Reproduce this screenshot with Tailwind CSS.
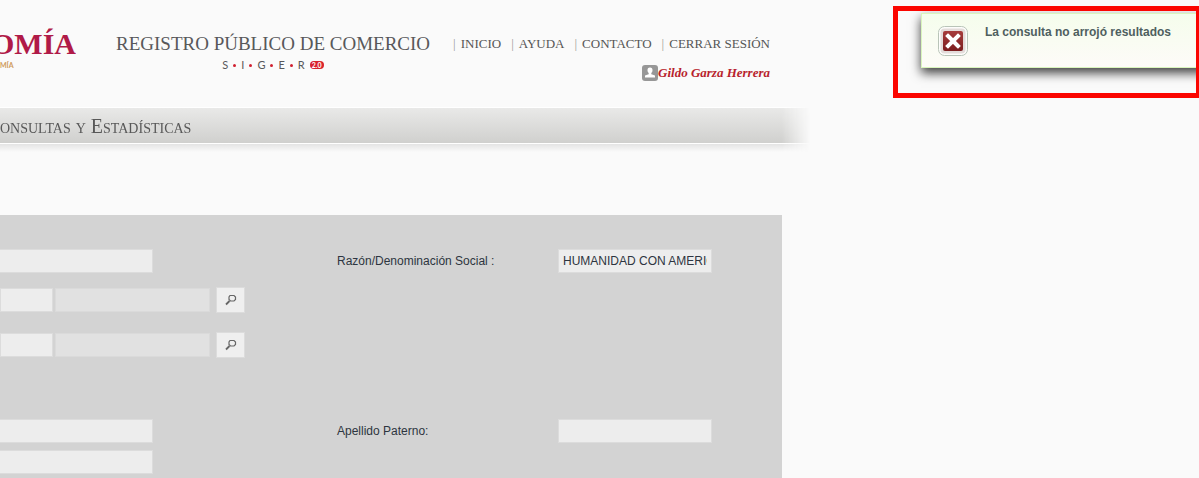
<!DOCTYPE html>
<html lang="es">
<head>
  <meta charset="UTF-8" />
  <meta name="viewport" content="width=device-width, initial-scale=1.0" />
  <title>Registro Público de Comercio</title>
  <script src="https://cdn.jsdelivr.net/npm/@tailwindcss/browser@4"></script>
</head>
<body class="relative min-h-screen overflow-hidden bg-[#fafafa] font-['Liberation_Sans',sans-serif] text-xs text-[#2d3540]">
  <div class="flex min-h-screen w-full max-w-[782px] flex-col">

    <header class="flex h-[107px] items-start pr-3 font-['Liberation_Serif',serif]">
      <div class="flex w-[76px] shrink-0 flex-col overflow-hidden pt-[26px]">
        <div class="flex justify-end text-[30px] leading-9 font-bold text-[#b01a48]">OMÍA</div>
        <div class="h-3 font-['Lato',sans-serif] text-[7px] leading-[6px] font-bold text-[#cf9a5c]">MÍA</div>
      </div>

      <div class="ml-10 flex w-[314px] shrink-0 flex-col pt-8">
        <h1 class="text-[19px] leading-6 whitespace-nowrap text-[#58585a]">REGISTRO PÚBLICO DE COMERCIO</h1>
        <div class="flex items-center justify-center gap-[5px] font-['Lato',sans-serif] text-[11px] leading-[18px] text-[#58585a]">
          <span>S</span><i class="size-[3px] rounded-full bg-[#d01f2f]"></i>
          <span>I</span><i class="size-[3px] rounded-full bg-[#d01f2f]"></i>
          <span>G</span><i class="size-[3px] rounded-full bg-[#d01f2f]"></i>
          <span>E</span><i class="size-[3px] rounded-full bg-[#d01f2f]"></i>
          <span>R</span>
          <span class="h-2 w-[14px] rounded-full bg-[#d9232e] text-center text-[7px] leading-2 font-bold text-white">2.0</span>
        </div>
      </div>

      <div class="ml-auto flex flex-col items-end pt-9">
        <nav class="flex gap-[10px] text-[13px] leading-4 whitespace-nowrap text-[#555]">
          <a href="#" class="flex gap-[5px]"><span class="text-[#999]">|</span>INICIO</a>
          <a href="#" class="flex gap-[5px]"><span class="text-[#999]">|</span>AYUDA</a>
          <a href="#" class="flex gap-[5px]"><span class="text-[#999]">|</span>CONTACTO</a>
          <a href="#" class="flex gap-[5px]"><span class="text-[#999]">|</span>CERRAR SESIÓN</a>
        </nav>
        <div class="mt-3 flex items-center text-[13px] leading-[18px] font-bold text-[#b81f2d] italic">
          <svg class="size-4" viewBox="0 0 16 16">
            <rect width="16" height="16" rx="3" fill="#979797" />
            <path d="M8 2.500c1.800 0 2.600 1.200 2.500 2.700 0 1.300-.6 2.200-1.200 2.800v1.300l3.700 1.200v2H3v-2l3.700-1.200V8c-.6-.6-1.200-1.500-1.200-2.800C5.400 3.700 6.200 2.500 8 2.500z" fill="#fff" />
          </svg>
          Gildo Garza Herrera
        </div>
      </div>
    </header>

    <!-- Menu bar, fades out past the right edge of the column -->
    <div class="-mr-7 [mask-image:linear-gradient(to_right,black_calc(100%-28px),transparent)]">
      <div class="flex h-[37px] items-center border-y border-white bg-linear-to-b from-[#e9e9e8] to-[#d0d0ce] font-['Liberation_Serif',serif] text-xl text-[#585858] [font-variant:small-caps]">
        <a href="#">onsultas y Estadísticas</a>
      </div>
      <div class="h-2 bg-linear-to-b from-[#e4e4e4] to-[#fafafa]"></div>
    </div>

    <form class="mt-[63px] flex-1 bg-[#d3d3d3] pt-[34px] pb-1">
      <div class="grid grid-cols-[337px_221px_1fr] items-center">
        <input type="text" aria-label="Folio" class="h-6 w-[153px] border border-l-0 border-[#dcdcdc] bg-[#ededed] px-1" />
        <label for="razon">Razón/Denominación Social :</label>
        <input id="razon" type="text" value="HUMANIDAD CON AMERICA" class="h-6 w-[154px] border border-[#dcdcdc] bg-[#ededed] px-[4px]" />
      </div>

      <div class="mt-[14px] flex h-[26px] items-center">
        <input type="text" aria-label="Clave de entidad" class="h-6 w-[53px] border border-[#dcdcdc] bg-[#ededed] px-1" />
        <input type="text" aria-label="Entidad" readonly class="ml-[2px] h-6 w-[155px] border border-[#dadada] bg-[#e1e1e1] px-1" />
        <button type="button" aria-label="Buscar entidad" class="ml-[6px] flex h-[26px] w-[29px] items-center justify-center border border-[#dcdcdc] bg-[#efefef]">
          <svg class="size-3" viewBox="0 0 12 12" fill="none" stroke="#666">
            <path d="M5 1.500h4l1.500 1.500v2.500l-1.500 1.500h-3.500l-1.500-1.500v-2.500z" stroke-width="1.200" />
            <path d="M4.500 7l-3.500 3.500" stroke-width="1.800" />
          </svg>
        </button>
      </div>

      <div class="mt-[19px] flex h-[26px] items-center">
        <input type="text" aria-label="Clave de oficina" class="h-6 w-[53px] border border-[#dcdcdc] bg-[#ededed] px-1" />
        <input type="text" aria-label="Oficina" readonly class="ml-[2px] h-6 w-[155px] border border-[#dadada] bg-[#e1e1e1] px-1" />
        <button type="button" aria-label="Buscar oficina" class="ml-[6px] flex h-[26px] w-[29px] items-center justify-center border border-[#dcdcdc] bg-[#efefef]">
          <svg class="size-3" viewBox="0 0 12 12" fill="none" stroke="#666">
            <path d="M5 1.500h4l1.500 1.500v2.500l-1.500 1.500h-3.500l-1.500-1.500v-2.500z" stroke-width="1.200" />
            <path d="M4.500 7l-3.500 3.500" stroke-width="1.800" />
          </svg>
        </button>
      </div>

      <div class="mt-[61px] grid grid-cols-[337px_221px_1fr] items-center gap-y-[7px]">
        <input type="text" aria-label="Nombre" class="h-6 w-[153px] border border-l-0 border-[#dcdcdc] bg-[#ededed] px-1" />
        <label for="paterno">Apellido Paterno:</label>
        <input id="paterno" type="text" class="h-6 w-[154px] border border-[#dcdcdc] bg-[#ededed] px-1" />
        <input type="text" aria-label="Apellido Materno" class="h-6 w-[153px] border border-l-0 border-[#dcdcdc] bg-[#ededed] px-1" />
      </div>
    </form>
  </div>

  <!-- Notification with its red frame -->
  <div class="absolute top-[6px] right-0 h-[92px] w-[306px] overflow-hidden border-5 border-r-3 border-[#fb0500] pt-[2px] pl-[23px]">
    <div role="alert" class="-mr-5 flex h-[55px] gap-[17px] border border-[#d9f5bd] bg-linear-to-b from-[#f5fdec] to-[#fdfbf8] pt-3 pl-4 shadow-[0_5px_10px_rgba(0,0,0,0.75)]">
      <svg class="size-[30px]" viewBox="0 0 30 30">
        <defs>
          <linearGradient id="red" x1="0" y1="0" x2="0" y2="1">
            <stop offset="0" stop-color="#a63c3c" />
            <stop offset="1" stop-color="#7c1d1f" />
          </linearGradient>
        </defs>
        <rect x=".5" y=".5" width="29" height="29" rx="6" fill="#fdfdfb" stroke="#b9c4b8" />
        <rect x="2.500" y="2.500" width="25" height="25" rx="4" fill="#e3dcda" />
        <rect x="5" y="5" width="20" height="20" rx="2" fill="url(#red)" />
        <path d="M10 10l10 10M20 10L10 20" stroke="#fff" stroke-width="4" stroke-linecap="square" />
      </svg>
      <p class="leading-3 font-bold text-[#4f5f5f]">La consulta no arrojó resultados</p>
    </div>
  </div>
</body>
</html>
